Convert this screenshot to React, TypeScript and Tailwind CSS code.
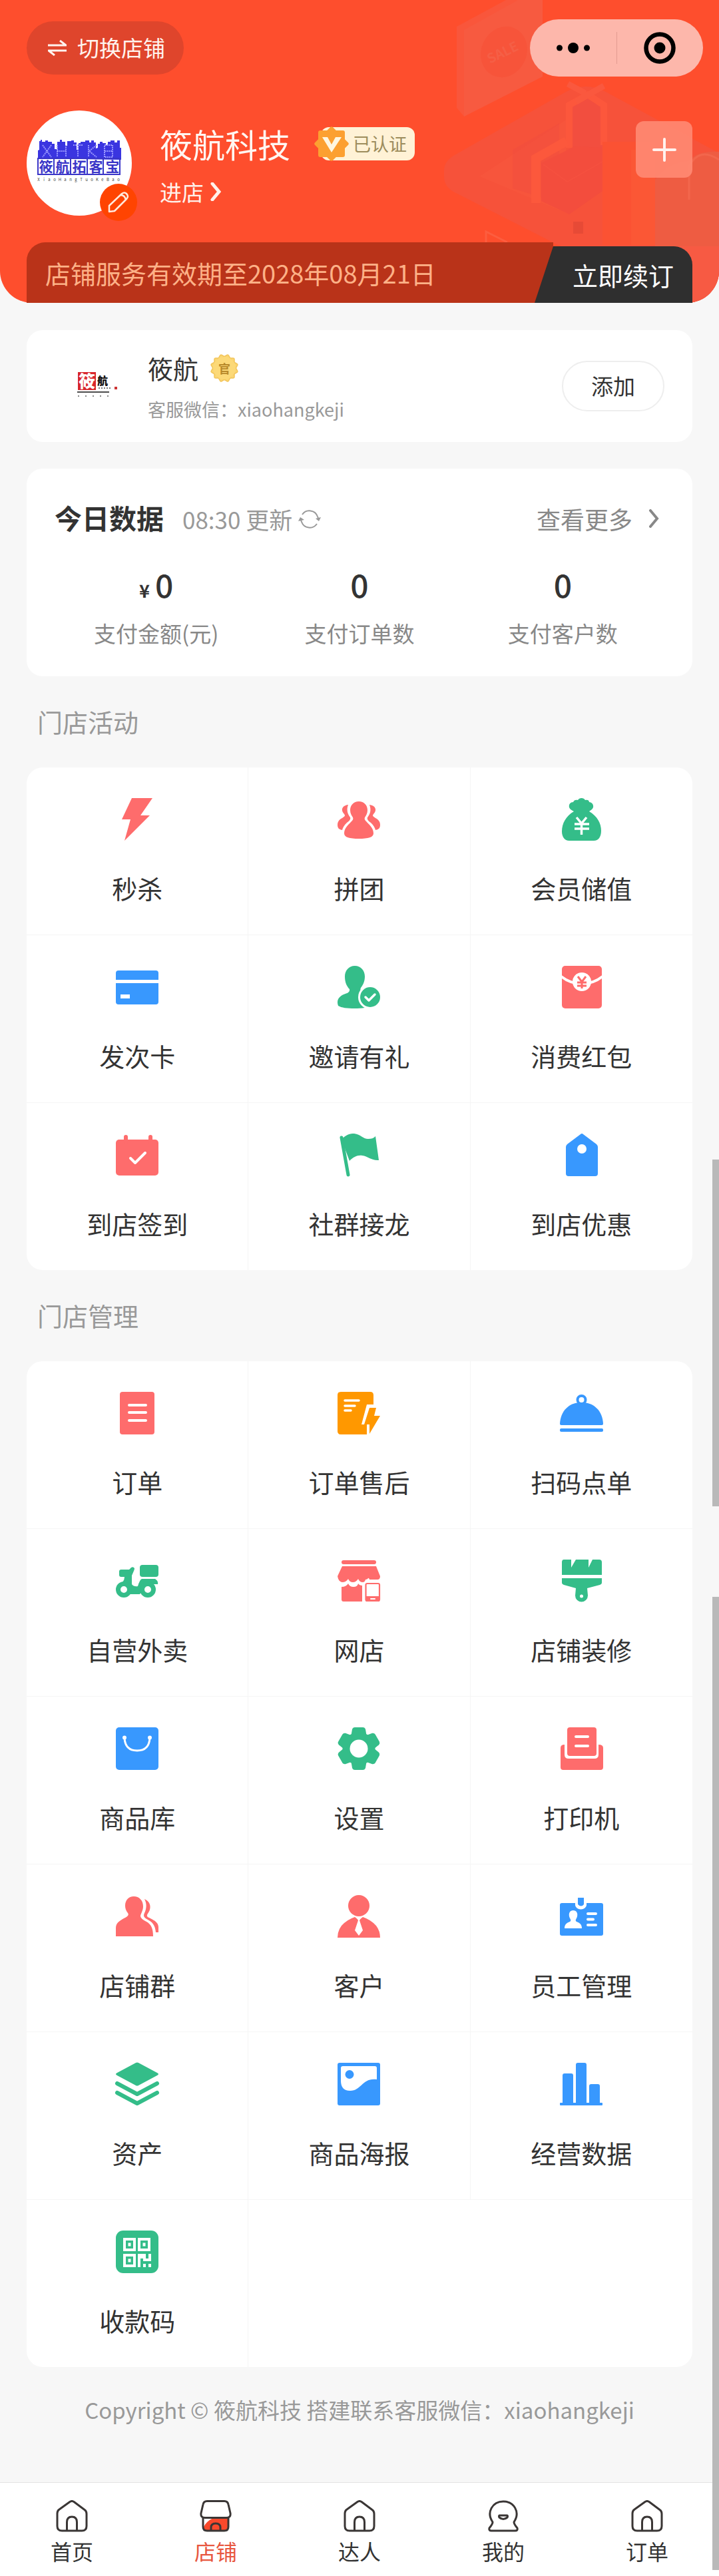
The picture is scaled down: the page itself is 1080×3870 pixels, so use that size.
import React from 'react';

const RED = '#fe6c6c';
const GREEN = '#34bd89';
const BLUE = '#3898fe';
const ORANGE = '#ff9800';

interface MenuItem {
  label: string;
  color: string;
  icon: React.ReactNode;
}

const activityItems: MenuItem[] = [
  {
    label: '秒杀',
    color: RED,
    icon: <path d="M24 0h31L37 26h14L13 64l9-32H9z" />,
  },
  {
    label: '拼团',
    color: RED,
    icon: (
      <>
        <path d="M32 5c8 0 13 6 13 13 0 5-2 8-4 11-1 3 0 4 3 7 5 5 10 10 10 17 0 6-8 8-22 8s-22-2-22-8c0-7 5-12 10-17 3-3 4-4 3-7-2-3-4-6-4-11 0-7 5-13 13-13z" />
        <path d="M16 10c-3 8-1 14 3 19 1 3-1 5-5 8-4 4-6 7-7 11-6-1-7-4-7-8 0-5 3-8 7-10 4-3 5-3 3-6-6-6-3-13 6-14z" />
        <path d="M48 10c3 8 1 14-3 19-1 3 1 5 5 8 4 4 6 7 7 11 6-1 7-4 7-8 0-5-3-8-7-10-4-3-5-3-3-6 6-6 3-13-6-14z" />
      </>
    ),
  },
  {
    label: '会员储值',
    color: GREEN,
    icon: (
      <>
        <path d="M27 3c2-4 9-4 11 0 3-1 6 0 6 3 4 0 7 4 6 8-1 3-4 4-6 6 12 7 18 18 18 29 0 9-4 15-11 15H14C7 64 3 58 3 50c0-12 6-23 18-30-3-2-6-3-7-6-1-5 2-8 6-8 1-3 4-4 7-3z" />
        <path d="m25 29 7.500 9 7.500-9M22 39h22M22 46h22M32.500 38v17" fill="none" stroke="#fff" strokeWidth="3.500" />
      </>
    ),
  },
  {
    label: '发次卡',
    color: BLUE,
    icon: (
      <>
        <path d="M4 7h56a4 4 0 0 1 4 4v10H0V11a4 4 0 0 1 4-4z" />
        <path d="M0 26h64v28a4 4 0 0 1-4 4H4a4 4 0 0 1-4-4z" />
        <path d="M7 43h14v6H7z" fill="#fff" />
      </>
    ),
  },
  {
    label: '邀请有礼',
    color: GREEN,
    icon: (
      <>
        <path d="M26 0c9 0 15 7 15 16 0 8-3 13-6 17-2 4 1 7 7 9 8 3 12 8 12 17-8 4-18 5-28 5-12 0-20-1-25-4-3-8 1-13 6-16 6-3 12-3 11-9-4-4-7-10-7-19C11 7 17 0 26 0z" />
        <circle cx="49" cy="47" r="18" fill="#fff" />
        <circle cx="49" cy="47" r="15" />
        <path d="m42 47 5 5 9-9" fill="none" stroke="#fff" strokeWidth="3.500" strokeLinecap="round" strokeLinejoin="round" />
      </>
    ),
  },
  {
    label: '消费红包',
    color: RED,
    icon: (
      <>
        <rect x="3" y="0" width="60" height="64" rx="5" />
        <path d="M2 16q14 11 31 11t31-11" fill="none" stroke="#fff" strokeWidth="4" />
        <circle cx="33" cy="24" r="14" fill="#fff" />
        <path d="m27 16 6 8 6-8M26 25h14M26 30h14M33 24v10" fill="none" stroke={RED} strokeWidth="3" />
      </>
    ),
  },
  {
    label: '到店签到',
    color: RED,
    icon: (
      <>
        <rect x="0" y="9" width="64" height="54" rx="5" />
        <path d="M15 5v8M52 5v8" stroke={RED} strokeWidth="6" strokeLinecap="round" />
        <path d="m22 37 7 7 15-15" fill="none" stroke="#fff" strokeWidth="4" strokeLinecap="round" strokeLinejoin="round" />
      </>
    ),
  },
  {
    label: '社群接龙',
    color: GREEN,
    icon: (
      <>
        <path d="M6 9C13 1 19 0 25 0c10 1 13 8 21 8 5 0 8-1 11-4l5 36c-11 1-16-6-25-7-7-1-13 2-19 8z" />
        <path d="m6 6 10 56" stroke={GREEN} strokeWidth="5" strokeLinecap="round" />
      </>
    ),
  },
  {
    label: '到店优惠',
    color: BLUE,
    icon: (
      <>
        <path d="M31 1q2-2 4 0l20 15q2 2 2 4v40q0 4-4 4H13q-4 0-4-4V20q0-2 2-4z" />
        <circle cx="33" cy="23" r="7" fill="#fff" />
      </>
    ),
  },
];

const manageItems: MenuItem[] = [
  {
    label: '订单',
    color: RED,
    icon: (
      <>
        <rect x="6" y="0" width="52" height="64" rx="4" />
        <path d="M20 20h25M20 31h25M20 43h25" stroke="#fff" strokeWidth="4" strokeLinecap="round" />
      </>
    ),
  },
  {
    label: '订单售后',
    color: ORANGE,
    icon: (
      <>
        <path d="M5 0h44q5 0 5 5v14H44l-8 30h8v15H5q-5 0-5-5V5q0-5 5-5z" />
        <path d="M11 13h21M11 21h15M11 28h9" stroke="#fff" strokeWidth="3.500" strokeLinecap="round" />
        <path d="M48 24h10l-3 12h9L48 63v-14h-8z" />
      </>
    ),
  },
  {
    label: '扫码点单',
    color: BLUE,
    icon: (
      <>
        <circle cx="32.500" cy="12" r="6" fill="none" stroke={BLUE} strokeWidth="4" />
        <path d="M0 48C1 29 13 16 32.500 16S64 29 65 48q0 2-2 2H2q-2 0-2-2z" />
        <rect x="0" y="55" width="65" height="5" rx="2" />
      </>
    ),
  },
  {
    label: '自营外卖',
    color: GREEN,
    icon: (
      <>
        <rect x="36" y="8" width="28" height="18" rx="4" />
        <path d="M8 15h12l3-3q3-2 5 1 0 2-1 4l-3 7v13q3 4 9 3 3-10 6-11h20q5 3 4 8H46L36 52H18L4 38q9-4 9-12H8q-3 0-3-3v-5q0-3 3-3z" />
        <circle cx="12" cy="45" r="8.500" fill="#fff" stroke={GREEN} strokeWidth="7" />
        <circle cx="48" cy="45" r="8.500" fill="#fff" stroke={GREEN} strokeWidth="7" />
      </>
    ),
  },
  {
    label: '网店',
    color: RED,
    icon: (
      <>
        <rect x="6" y="1" width="52" height="6" rx="3" />
        <path d="M7 10h51l6 15q0 5-4 5H48q-1-3-2-2-1 2-4 2-1 4-4 4-5 0-7-5-3 5-8 5t-7-5q-3 5-9 5-6-1-7-9z" />
        <path d="M6 41q7 0 10-5 2 5 8 5t7-5q2 3 6 3v24H9q-3 0-3-3z" />
        <rect x="42.500" y="36" width="20.500" height="26" rx="2" fill="#fff" stroke={RED} strokeWidth="2.200" />
        <path d="M42 55h21v8H44q-2 0-2-2z" />
        <path d="M50 59h6" stroke="#fff" strokeWidth="2" strokeLinecap="round" />
      </>
    ),
  },
  {
    label: '店铺装修',
    color: GREEN,
    icon: (
      <>
        <path d="M6 0h11v12l7-12h19v12l6-12h10q4 0 4 4v19H3V4q0-4 3-4z" />
        <path d="M3 28h60v7q0 2-3 3l-19 5 1 11a9 9 0 0 1-19 0l1-11-18-5q-3-1-3-3z" />
        <circle cx="32.500" cy="55" r="2.500" fill="#fff" />
      </>
    ),
  },
  {
    label: '商品库',
    color: BLUE,
    icon: (
      <>
        <rect x="0" y="0" width="64" height="64" rx="5" />
        <path d="M13 16q1 19 19 19t19-19" fill="none" stroke="#fff" strokeWidth="3" />
        <circle cx="13" cy="15.500" r="3" fill="#fff" />
        <circle cx="51" cy="15.500" r="3" fill="#fff" />
      </>
    ),
  },
  {
    label: '设置',
    color: GREEN,
    icon: (
      <>
        <circle cx="32" cy="32" r="24.500" />
        {[0, 60, 120, 180, 240, 300].map((angle) => (
          <path key={angle} d="M22 3q1-3 4-3h12q3 0 4 3l2 12H20z" transform={`rotate(${angle} 32 32)`} />
        ))}
        <circle cx="32" cy="32" r="13.500" fill="#fff" />
      </>
    ),
  },
  {
    label: '打印机',
    color: RED,
    icon: (
      <>
        <rect x="11" y="0" width="44" height="43" rx="4" />
        <path d="M24 14h18M24 28h18" stroke="#fff" strokeWidth="4" strokeLinecap="round" />
        <path d="M7 26v15q0 6 6 6h39q6 0 6-6V26q7 0 7 5v29q0 4-4 4H5q-4 0-4-4V31q0-5 6-5z" />
      </>
    ),
  },
  {
    label: '店铺群',
    color: RED,
    icon: (
      <>
        <path d="M27 2c8 0 14 6 14 15 0 6-3 10-4 14 0 4 4 6 9 9 7 4 10 10 10 22H0V50c0-8 5-11 12-15 6-3 8-5 6-8-3-4-4-7-4-11C14 8 19 2 27 2z" />
        <path d="M43 6c7 3 10 9 8 16-1 4-5 7-4 10 2 3 17 6 17 16v8h-4c-1-11-5-15-12-19-6-3-7-6-5-10 3-6 4-14 0-21z" />
      </>
    ),
  },
  {
    label: '客户',
    color: RED,
    icon: (
      <>
        <circle cx="32" cy="16" r="16" />
        <path d="M26 33q-12 4-20 13-6 8-6 18h64q0-10-6-18-8-9-20-13l-5 4h-2z" />
        <path d="m28 33 8 0-3 5 5 15-6 8-6-8 5-15z" fill="#fff" />
      </>
    ),
  },
  {
    label: '员工管理',
    color: BLUE,
    icon: (
      <>
        <rect x="0" y="12" width="65" height="49" rx="3" />
        <path d="M23 10h17v5a8 6 0 0 1-17 0z" fill="#fff" />
        <path d="M27 4h9v10q-4 5-9 0z" />
        <path d="M20 23c5 0 7 4 6 9-1 4-4 6-1 8 5 2 8 4 8 10H7c0-6 3-8 8-10 3-2 0-4-1-8-1-5 1-9 6-9z" fill="#fff" />
        <path d="M42 28h12M42 36.500h8M42 45h12" stroke="#fff" strokeWidth="4" strokeLinecap="round" />
      </>
    ),
  },
  {
    label: '资产',
    color: GREEN,
    icon: (
      <>
        <path d="M30 0q2-1 4 0l28 15q4 2 0 4L34 34q-2 1-4 0L2 19q-4-2 0-4z" />
        <path d="m2 31 30 16 30-16M2 45l30 16 30-16" fill="none" stroke={GREEN} strokeWidth="6" strokeLinecap="round" strokeLinejoin="round" />
      </>
    ),
  },
  {
    label: '商品海报',
    color: BLUE,
    icon: (
      <>
        <rect x="0" y="0" width="64" height="64" rx="3" />
        <path d="M8 5h48q3 0 3 3v17C37 22 36 42 19 42 9 42 5 36 5 27V8q0-3 3-3z" fill="#fff" />
        <circle cx="18" cy="17.500" r="6.500" />
      </>
    ),
  },
  {
    label: '经营数据',
    color: BLUE,
    icon: (
      <>
        <rect x="4" y="16" width="16" height="48" rx="3" />
        <rect x="24" y="0" width="16" height="64" rx="3" />
        <rect x="44" y="32" width="16" height="32" rx="3" />
        <rect x="0" y="60" width="64" height="4" rx="1" />
      </>
    ),
  },
  {
    label: '收款码',
    color: GREEN,
    icon: (
      <>
        <rect x="0" y="0" width="64" height="64" rx="11" />
        <g fill="none" stroke="#fff" strokeWidth="4">
          <path d="M13 13h15v16H13zM35 13h15v16H35zM13 37h15v16H13z" />
        </g>
        <path d="M18.500 18.500h4v5h-4zM40.500 18.500h4v5h-4zM18.500 42.500h4v5h-4z" fill="#fff" />
        <path d="M33 35h12v7h4v-7h4v11H41v-4h-4v13h-4zM41 50h4v5h-4zM49 50h4v5h-4z" fill="#fff" />
      </>
    ),
  },
];

const stats = [
  { label: '支付金额(元)', value: '0', prefix: '¥' },
  { label: '支付订单数', value: '0' },
  { label: '支付客户数', value: '0' },
];

const houseIcon = (
  <>
    <path d="M21 2.500q3-2 6 0l16 12q3 2 3 6V39q0 7-7 7H9q-7 0-7-7V20q0-4 3-6z" />
    <path d="M16.500 46V33q0-8 7.500-8t7.500 8v13" />
  </>
);

const tabs = [
  { label: '首页', icon: houseIcon },
  {
    label: '店铺',
    active: true,
    icon: (
      <>
        <path d="M5 27h38v13q0 6-6 6H11q-6 0-6-6z" fill="#f9492c" stroke="none" />
        <path d="M6 27h14Q10 32 6 40z" fill="#fff" stroke="none" />
        <path d="M5 27v13q0 6 6 6h26q6 0 6-6V27" />
        <path d="M11 1.500h26q5 0 6 5l3 13q1 7-6 7H8q-7 0-6-7l3-13q1-5 6-5z" fill="#fff" />
        <path d="M17 46v-5q0-6 7-6t7 6v5" />
      </>
    ),
  },
  { label: '达人', icon: houseIcon },
  {
    label: '我的',
    icon: (
      <>
        <path d="M8 33C-2 18 8 2 24 2s26 16 16 31q0 3 5 9 1 4-3 4H6q-4 0-3-4 5-6 5-9z" />
        <path d="M18 23h12q1 1 0 3-6 5-12 0-1-2 0-3z" />
      </>
    ),
  },
  { label: '订单', icon: houseIcon },
];

const HeaderArt: React.FC = () => (
  <svg className="absolute right-0 top-0 h-full w-[420px]" viewBox="0 0 420 455" fill="none" aria-hidden="true">
    <path d="M26 40 100 0h55v115L37 175l-11-13z" fill="#f9563b" />
    <path d="M37 45 118 0h37v115L37 175z" fill="#f75a40" />
    <ellipse cx="97" cy="78" rx="34" ry="39" fill="#f7543a" transform="rotate(25 97 78)" />
    <text x="76" y="96" fontSize="20" fontWeight="700" fill="#f55f46" transform="rotate(-26 76 96)">SALE</text>
    <path d="M7 255q0-12 14-21l169-96q30-16 60 0l170 92v225H380L176 367 21 288Q7 280 7 265z" fill="#f6523a" />
    <path d="M60 265 190 180v140z" fill="#f7553c" />
    <path d="m110 225 70-40v120l-70-22z" fill="#f24f3e" opacity=".6" />
    <path d="M200 160 222 148l24 12v62h-46z" fill="#f24e3f" />
    <path d="M195 222v-64l28-16 24 16v60" stroke="#fc573c" strokeWidth="10" />
    <path d="m193 126 26 14M247 129l-42 24" stroke="#fa583e" strokeWidth="9" />
    <path d="m153 245 50-25 42 2v65l-50 35-42-20z" fill="#f34d3d" />
    <path d="m156 247 36 26 53-30" stroke="#f5503f" strokeWidth="2" />
    <path d="M145 305v-67l46-26" stroke="#fc583c" strokeWidth="14" />
    <path d="M245 213h79v155h-79z" fill="#fb5233" />
    <path d="M288 225h36v143h-36z" fill="#fb5735" />
    <path d="M324 270q20-26 50-28 14-16 46-14v227h-96z" fill="#ee5c42" />
    <path d="M375 300v-50q15-30 45-10" stroke="#f3664c" strokeWidth="3" />
    <path d="M356 370h64v85h-64z" fill="#f75a43" />
    <path d="M70 364v-16l32 16" stroke="#fd5d3f" strokeWidth="3" />
    <path d="M201 333h15v18h-15z" fill="#e74a36" />
  </svg>
);

const AvatarLogo: React.FC = () => (
  <svg className="h-[158px] w-[158px]" viewBox="0 0 158 158" aria-hidden="true">
    <path
      d="M17 72V60l2-1V46h2v-2h2v3h5v-2h4v2h6v3h4v8h4V47h4v-3h3v3h5v6h3v-7h6v-1h4v3h4v11h3V49h3v-2h7v-2h6v3h3v-3h4v3h3v9l3-1v-6h3v-3h4v2h5v3h3v-5h4v-2h6v3h4v-3h4v11h2v18z"
      fill="#3a35e0"
    />
    <g stroke="#9b99ff" strokeWidth="2" fill="none" strokeDasharray="2 1">
      <path d="m24 52 13 18M37 52 24 70M46 52v18M59 52v18M46 61h13M70 52h14M77 52v18M93 52v18M105 52 94 61l11 9M117 52h12v18h-12zM117 61h12" />
    </g>
    <path d="M17 72h123v24H17zM41 72v24M66 72v24M91 72v24M115 72v24" fill="none" stroke="#3a35c8" strokeWidth="2" />
    {['筱', '航', '拓', '客', '宝'].map((char, i) => (
      <text key={char} x={29 + i * 25} y={92} textAnchor="middle" fontSize="21" fontWeight="700" fill="#3a35c8">
        {char}
      </text>
    ))}
    {'XiaoHangTuoKeBao'.split('').map((char, i) => (
      <text key={i} x={18 + i * 8} y={106} textAnchor="middle" fontSize="6" fill="#444">
        {char}
      </text>
    ))}
  </svg>
);

const ContactLogo: React.FC = () => (
  <svg className="h-[100px] w-[100px] shrink-0" viewBox="0 0 100 100" aria-hidden="true">
    <rect x="35" y="29" width="27" height="27" fill="#d8262c" />
    <text x="48.500" y="52" textAnchor="middle" fontSize="25" fontWeight="900" fill="#fff">筱</text>
    <text x="72" y="48" textAnchor="middle" fontSize="16" fontWeight="900" fill="#111">航</text>
    <path d="M66 53h20" stroke="#777" strokeWidth="2" strokeDasharray="2 2" />
    <rect x="90" y="51" width="4" height="4" fill="#c33" />
    <path d="M34 59h48" stroke="#111" strokeWidth="1.500" />
    <path d="M35 65h47" stroke="#888" strokeWidth="2" strokeDasharray="2 9" />
  </svg>
);

const ChevronRight: React.FC<{ className: string; strokeWidth: number }> = ({ className, strokeWidth }) => (
  <svg className={className} viewBox="0 0 16 28" fill="none" stroke="currentColor" strokeWidth={strokeWidth} strokeLinecap="round" aria-hidden="true">
    <path d="m3 2 10 12L3 26" />
  </svg>
);

const MenuGrid: React.FC<{ title: string; items: MenuItem[] }> = ({ title, items }) => {
  const lastRow = Math.floor((items.length - 1) / 3);
  return (
    <section>
      <h2 className="px-4 pt-10 pb-[41px] text-[38px] leading-[56px] text-[#999]">{title}</h2>
      <div className="grid grid-cols-3 overflow-hidden rounded-3xl bg-white">
        {items.map((item, i) => (
          <a
            key={item.label}
            href="#"
            className={`flex flex-col items-center border-[#f5f5f5] pt-[46px] pb-[42px] ${i % 3 !== 2 ? 'border-r' : ''} ${
              Math.floor(i / 3) !== lastRow ? 'border-b' : ''
            }`}
          >
            <svg className="h-16 w-16 overflow-visible" viewBox="0 0 64 64" fill={item.color} aria-hidden="true">
              {item.icon}
            </svg>
            <span className="mt-[43px] text-[38px] leading-[56px] text-[#333]">{item.label}</span>
          </a>
        ))}
      </div>
    </section>
  );
};

const App: React.FC = () => {
  return (
    <div className="relative flex min-h-screen flex-col bg-[#f7f7f7] font-['Noto_Sans_CJK_SC',sans-serif]">
      <header className="relative">
        <div className="absolute inset-0 overflow-hidden rounded-b-[48px] bg-[#fe4e2d]">
          <HeaderArt />
        </div>

        <div className="relative flex items-center justify-between pt-[29px] pr-6 pl-10">
          <button className="flex h-20 items-center gap-4 rounded-full bg-[#df452c] pr-7 pl-8 text-[33px] text-[#fff3ee]">
            <svg className="h-6 w-7" viewBox="0 0 28 24" fill="none" stroke="currentColor" strokeWidth="3" strokeLinejoin="round" aria-hidden="true">
              <path d="M0 8h27l-9-7M28 16H1l9 7" />
            </svg>
            切换店铺
          </button>
          <div className="flex h-[86px] w-[260px] items-center rounded-full bg-[#fdb7ab]">
            <button className="flex h-full flex-1 items-center justify-center" aria-label="更多">
              <svg className="h-4 w-[50px]" viewBox="0 0 50 16" aria-hidden="true">
                <circle cx="4.500" cy="8" r="4.500" />
                <circle cx="25" cy="8" r="8" />
                <circle cx="45.500" cy="8" r="4.500" />
              </svg>
            </button>
            <span className="h-12 w-px bg-[#e39c92]" />
            <button className="flex h-full flex-1 items-center justify-center" aria-label="关闭">
              <svg className="h-12 w-12" viewBox="0 0 48 48" aria-hidden="true">
                <circle cx="24" cy="24" r="20.500" fill="none" stroke="#000" strokeWidth="6.500" />
                <circle cx="24" cy="24" r="8.500" />
              </svg>
            </button>
          </div>
        </div>

        <div className="relative mt-[51px] flex px-10">
          <div className="relative shrink-0">
            <div className="h-[158px] w-[158px] overflow-hidden rounded-full bg-white">
              <AvatarLogo />
            </div>
            <button className="absolute -right-2 -bottom-2 flex h-14 w-14 items-center justify-center rounded-full bg-[#ff4401]" aria-label="编辑">
              <svg className="h-8 w-8" viewBox="0 0 32 32" fill="none" stroke="#ffe9dc" strokeWidth="2.500" strokeLinejoin="round" aria-hidden="true">
                <path d="M2 30v-9L21 3q4-3 7 0 4 4 0 8L10 29zM19 5q7 0 8 8" />
              </svg>
            </button>
          </div>
          <div className="ml-[42px] flex flex-col">
            <div className="mt-[14px] flex items-center">
              <h1 className="text-[49px] leading-[72px] text-[#fff6f1]">筱航科技</h1>
              <span className="relative ml-[46px] flex h-[50px] items-center rounded-xl bg-[#fff2d6] pr-3 pl-12 text-[27px] text-[#9c8c5c]">
                <svg className="absolute -left-3 h-14 w-14" viewBox="0 0 56 56" aria-hidden="true">
                  <g fill="#fca031" stroke="#fca031" strokeWidth="6" strokeLinejoin="round">
                    <path d="M11 11h34v34H11z" />
                    <path d="M12 12h32v32H12z" transform="rotate(45 28 28)" />
                  </g>
                  <path d="M14 18h8l6 11 6-11h9L28 41z" fill="#fff6e0" />
                </svg>
                已认证
              </span>
            </div>
            <a href="#" className="mt-3 flex items-center gap-[10px] text-[33px] leading-12 text-[#fff1ea]">
              进店
              <ChevronRight className="h-7 w-4" strokeWidth={5} />
            </a>
          </div>
          <button className="mt-4 ml-auto flex h-[85px] w-[85px] items-center justify-center rounded-xl bg-[#ff8a73]/90" aria-label="新增">
            <svg className="h-9 w-9" viewBox="0 0 36 36" stroke="#fff2ee" strokeWidth="4" strokeLinecap="round" aria-hidden="true">
              <path d="M18 2v32M2 18h32" />
            </svg>
          </button>
        </div>

        <div className="relative mt-10 flex items-end px-10">
          <p className="flex h-[91px] flex-1 items-center rounded-tl-[28px] bg-[#b93319] pl-7 text-[38px] text-[#fdb187]">
            店铺服务有效期至2028年08月21日
          </p>
          <button className="-ml-7 flex h-[85px] w-[237px] items-center justify-end rounded-tr-[28px] bg-[#2f2f2f] pr-7 text-[38px] text-white [clip-path:polygon(28px_0,100%_0,100%_100%,0_100%)]">
            立即续订
          </button>
        </div>
      </header>

      <main className="px-10 pb-[85px]">
        <section className="mt-[41px] flex items-center rounded-3xl bg-white px-[42px] py-[29px]">
          <ContactLogo />
          <div className="ml-10">
            <div className="flex items-center gap-4 text-[38px] leading-[56px] text-[#333]">
              筱航
              <span className="relative flex h-[46px] w-[46px] items-center justify-center">
                <svg className="absolute inset-0" viewBox="0 0 46 46" aria-hidden="true">
                  <g fill="#fbd672" stroke="#f3c65c" strokeWidth="1.500" strokeLinejoin="round">
                    {[0, 30, 60].map((angle) => (
                      <rect key={angle} x="8" y="8" width="30" height="30" rx="2" transform={`rotate(${angle} 23 23)`} />
                    ))}
                  </g>
                  <circle cx="23" cy="23" r="17" fill="#fcd978" />
                </svg>
                <span className="relative text-lg leading-none font-bold text-[#b8892a]">官</span>
              </span>
            </div>
            <p className="mt-[14px] text-[27px] leading-10 text-[#999]">客服微信：xiaohangkeji</p>
          </div>
          <button className="ml-auto h-[76px] w-[154px] rounded-full border-2 border-[#eee] text-[33px] text-[#333]">添加</button>
        </section>

        <section className="mt-10 rounded-3xl bg-white px-[42px] pt-[45px] pb-[41px]">
          <div className="flex items-center justify-between leading-[56px]">
            <div className="flex items-baseline">
              <h2 className="text-[41px] font-bold text-[#333]">今日数据</h2>
              <button className="ml-7 flex items-center gap-2 text-[35px] text-[#999]">
                08:30 更新
                <svg className="h-9 w-9" viewBox="0 0 36 36" fill="none" stroke="currentColor" strokeWidth="2" aria-hidden="true">
                  <path d="M7 11a13 13 0 0 1 23 3l2 5M29 25a13 13 0 0 1-23-3l-2-5" />
                  <path d="m27 17 5 4 3-6zM1 21l3-6 6 4z" fill="currentColor" stroke="none" />
                </svg>
              </button>
            </div>
            <a href="#" className="flex items-center gap-6 pr-2 text-[36px] text-[#888]">
              查看更多
              <ChevronRight className="h-7 w-4" strokeWidth={4} />
            </a>
          </div>
          <dl className="mt-[37px] grid grid-cols-3 text-center">
            {stats.map((stat) => (
              <div key={stat.label} className="flex flex-col-reverse">
                <dt className="mt-[18px] text-[33px] leading-12 text-[#888]">{stat.label}</dt>
                <dd className="text-[48px] leading-[64px] font-medium text-[#333]">
                  {stat.prefix && <span className="mr-2 text-[27px] leading-none font-bold">{stat.prefix}</span>}
                  {stat.value}
                </dd>
              </div>
            ))}
          </dl>
        </section>

        <MenuGrid title="门店活动" items={activityItems} />
        <MenuGrid title="门店管理" items={manageItems} />

        <footer className="mt-10 text-center text-[33px] leading-12 text-[#999]">
          Copyright © 筱航科技 搭建联系客服微信：xiaohangkeji
        </footer>
      </main>

      <nav className="mt-auto grid grid-cols-5 border-t border-[#e3e3e3] bg-white pt-[26px] pb-[19px]">
        {tabs.map((tab) => (
          <a key={tab.label} href="#" className={`flex flex-col items-center ${tab.active ? 'text-[#e8573f]' : 'text-[#333]'}`}>
            <svg className="h-12 w-12" viewBox="0 0 48 48" fill="none" stroke="#3a3635" strokeWidth="3" strokeLinejoin="round" aria-hidden="true">
              {tab.icon}
            </svg>
            <span className="mt-2 text-[32px] leading-10">{tab.label}</span>
          </a>
        ))}
      </nav>

      {/* scroll indicators */}
      <div className="absolute top-[1742px] right-0 h-[521px] w-[10px] bg-[#b9b9b9]" />
      <div className="absolute top-[2399px] right-0 bottom-[10px] w-[10px] bg-[#b9b9b9]" />
    </div>
  );
};

export default App;
